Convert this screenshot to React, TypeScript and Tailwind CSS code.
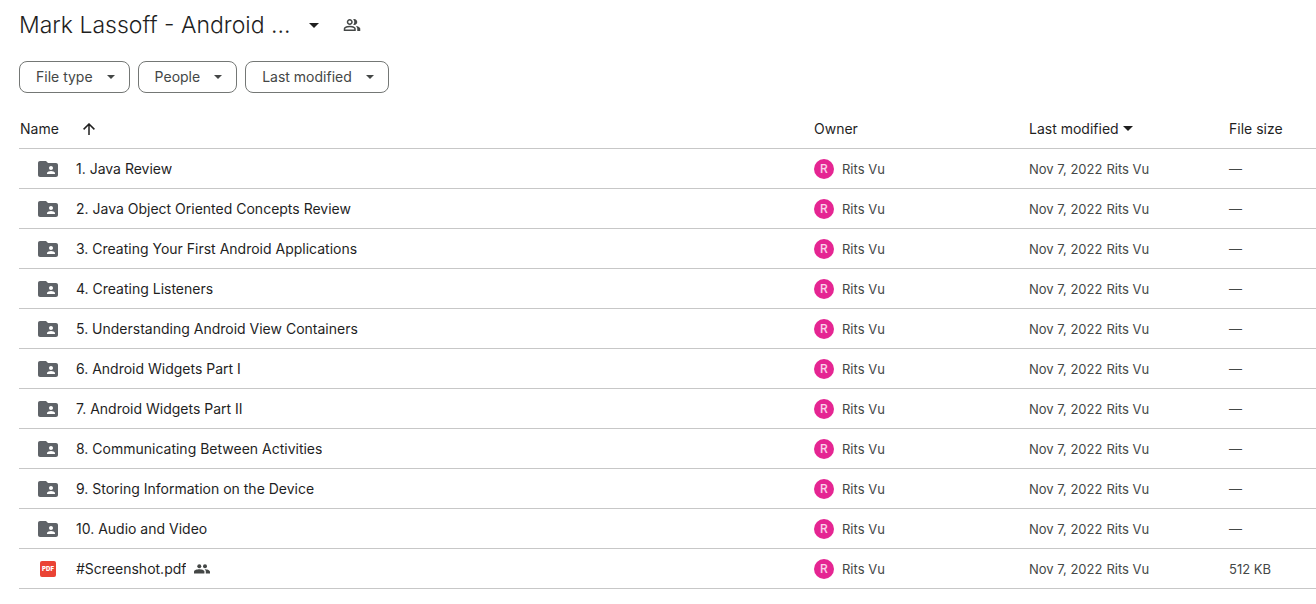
import React, { useState } from 'react';

type FileItem = {
  name: string;
  kind: 'folder' | 'pdf';
  shared?: boolean;
  size: string;
};

const files: FileItem[] = [
  { name: '1. Java Review', kind: 'folder', size: '—' },
  { name: '2. Java Object Oriented Concepts Review', kind: 'folder', size: '—' },
  { name: '3. Creating Your First Android Applications', kind: 'folder', size: '—' },
  { name: '4. Creating Listeners', kind: 'folder', size: '—' },
  { name: '5. Understanding Android View Containers', kind: 'folder', size: '—' },
  { name: '6. Android Widgets Part I', kind: 'folder', size: '—' },
  { name: '7. Android Widgets Part II', kind: 'folder', size: '—' },
  { name: '8. Communicating Between Activities', kind: 'folder', size: '—' },
  { name: '9. Storing Information on the Device', kind: 'folder', size: '—' },
  { name: '10. Audio and Video', kind: 'folder', size: '—' },
  { name: '#Screenshot.pdf', kind: 'pdf', shared: true, size: '512 KB' },
];

const filters = [
  { label: 'File type', options: ['Folders', 'PDFs', 'Videos'] },
  { label: 'People', options: ['Rits Vu'] },
  { label: 'Last modified', options: ['Today', 'Last 7 days', 'This year'] },
];

const headCell = 'h-10 p-0 border-b border-[#c7c7c7] font-normal';
const bodyCell = 'h-10 p-0 border-b border-[#c7c7c7]';

const Caret: React.FC<{ className?: string }> = ({ className }) => (
  <svg viewBox="0 0 10 5" className={className} fill="currentColor" aria-hidden="true">
    <path d="M0 0h10L5 5z" />
  </svg>
);

const ArrowUp = () => (
  <svg viewBox="0 0 12 12" className="w-3 h-3" fill="none" stroke="currentColor" strokeWidth="1.5" aria-hidden="true">
    <path d="M6 12V1.2M.6 6.4 6 1l5.4 5.4" />
  </svg>
);

const GroupOutline = () => (
  <svg viewBox="0 -960 960 960" className="w-[18px] h-[18px]" fill="currentColor" aria-hidden="true">
    <path d="M40-160v-112q0-34 17.5-62.5T104-378q62-31 126-46.5T360-440q66 0 130 15.5T616-378q29 15 46.5 43.5T680-272v112H40Zm720 0v-120q0-44-24.5-84.5T666-434q51 6 96 20.5t84 35.5q36 20 55 44.5t19 53.5v120H760ZM360-480q-66 0-113-47t-47-113q0-66 47-113t113-47q66 0 113 47t47 113q0 66-47 113t-113 47Zm400-160q0 66-47 113t-113 47q-11 0-28-2.5t-28-5.5q27-32 41.5-71t14.5-81q0-42-14.5-81T544-792q14-5 28-6.5t28-1.5q66 0 113 47t47 113ZM120-240h480v-32q0-11-5.5-20T580-306q-54-27-109-40.5T360-360q-56 0-111 13.5T140-306q-9 5-14.5 14t-5.5 20v32Zm240-320q33 0 56.5-23.5T440-640q0-33-23.5-56.5T360-720q-33 0-56.5 23.5T280-640q0 33 23.5 56.5T360-560Z" />
  </svg>
);

const GroupFilled = () => (
  <svg viewBox="0 0 16 10" className="w-4 h-[10px] text-[#444746]" fill="currentColor" role="img" aria-label="Shared">
    <circle cx="5.3" cy="2.2" r="2" />
    <circle cx="11" cy="2.2" r="2" />
    <path d="M0 9.4V7.6c0-1.5 3.2-2.3 5.2-2.3s5.2.8 5.2 2.3v1.8z" />
    <path d="M10.6 5.3c2 0 5.4.8 5.4 2.5v1.6h-4.2V7.6c0-1-.5-1.7-1.2-2.3z" />
  </svg>
);

const SharedFolder = () => (
  <svg viewBox="0 0 24 24" className="w-6 h-6 text-[#5f6368]" fill="currentColor" aria-hidden="true">
    <path d="M20 6h-8l-2-2H4c-1.1 0-1.99.9-1.99 2L2 18c0 1.1.9 2 2 2h16c1.1 0 2-.9 2-2V8c0-1.1-.9-2-2-2zm-5 3c1.1 0 2 .9 2 2s-.9 2-2 2-2-.9-2-2 .9-2 2-2zm4 8h-8v-1c0-1.33 2.67-2 4-2s4 .67 4 2v1z" />
  </svg>
);

const PdfBadge = () => (
  <span className="flex items-center justify-center w-4 h-4 rounded-xs bg-[#ea4335] text-white text-[6px] leading-none font-black">
    PDF
  </span>
);

export default function App() {
  const [ascending, setAscending] = useState(true);
  const rows = ascending ? files : [...files].reverse();

  return (
    <main className="bg-white pl-[19px] text-sm text-[#1f1f1f] font-[Inter,'Liberation_Sans',sans-serif]">
      <header className="flex items-center h-[50px]">
        <h1>
          <button type="button" aria-haspopup="menu" className="flex items-center gap-[18px] text-[23px] leading-8 font-light">
            Mark Lassoff - Android ...
            <Caret className="w-[10px] h-[5px]" />
          </button>
        </h1>
        <button type="button" aria-label="Manage access" className="ml-6 text-[#444746]">
          <GroupOutline />
        </button>
      </header>

      <div className="flex gap-2 pt-[11px] pb-4 text-[#444746]">
        {filters.map(filter => (
          <div key={filter.label} className="relative">
            <select
              aria-label={filter.label}
              className="block h-8 pl-4 pr-9 appearance-none field-sizing-content rounded-lg border border-[#747775] bg-white"
            >
              <option>{filter.label}</option>
              {filter.options.map(option => (
                <option key={option}>{option}</option>
              ))}
            </select>
            <Caret className="absolute right-[15px] top-[14px] w-2 h-1 pointer-events-none" />
          </div>
        ))}
      </div>

      <table className="w-full table-fixed border-separate border-spacing-0 text-left">
        <thead>
          <tr>
            <th className={headCell}>
              <button
                type="button"
                onClick={() => setAscending(!ascending)}
                className="flex items-center gap-6 pl-px"
              >
                Name
                <ArrowUp />
              </button>
            </th>
            <th className={`${headCell} w-[215px]`}>Owner</th>
            <th className={`${headCell} w-[200px]`}>
              <button type="button" className="flex items-center gap-1">
                Last modified
                <Caret className="w-[10px] h-[5px]" />
              </button>
            </th>
            <th className={`${headCell} w-[87px]`}>File size</th>
          </tr>
        </thead>
        <tbody className="text-[13px] leading-[22px] text-[#444746]">
          {rows.map(file => (
            <tr key={file.name}>
              <td className={bodyCell}>
                <div className="flex items-center pl-[17px] text-sm text-[#1f1f1f]">
                  <span className="flex justify-center w-6 mr-4">
                    {file.kind === 'folder' ? <SharedFolder /> : <PdfBadge />}
                  </span>
                  <span className="truncate">{file.name}</span>
                  {file.shared && (
                    <span className="ml-2">
                      <GroupFilled />
                    </span>
                  )}
                </div>
              </td>
              <td className={bodyCell}>
                <div className="flex items-center gap-2">
                  <span className="flex items-center justify-center w-5 h-5 rounded-full bg-[#e52592] text-white/80 text-xs font-medium">
                    R
                  </span>
                  Rits Vu
                </div>
              </td>
              <td className={bodyCell}>
                <div className="flex gap-1">
                  <span>Nov 7, 2022</span>
                  <span>Rits Vu</span>
                </div>
              </td>
              <td className={bodyCell}>{file.size}</td>
            </tr>
          ))}
        </tbody>
      </table>
    </main>
  );
}
